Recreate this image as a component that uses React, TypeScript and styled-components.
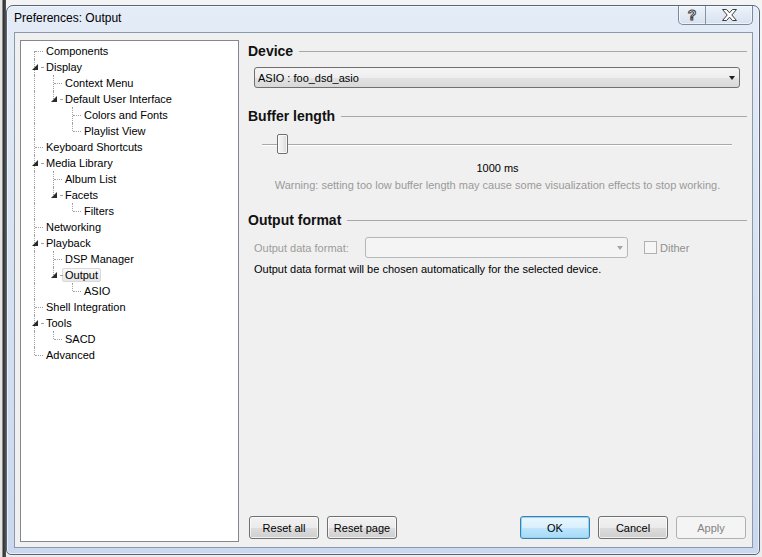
import React from 'react';
import styled, { createGlobalStyle, css } from 'styled-components';

const GlobalStyle = createGlobalStyle`
  html, body { margin: 0; padding: 0; }
  body {
    width: 762px; height: 557px; overflow: hidden;
    font-family: "Liberation Sans", Arial, sans-serif;
    font-size: 11px; color: #000;
  }
  * { box-sizing: border-box; }
`;

const Desktop = styled.div`
  width: 762px;
  height: 557px;
  padding: 5px 2px 2px 6px;
  display: flex;
  background:
    linear-gradient(90deg, #e4e4e4 0, #e4e4e4 2px, #2e2e2e 3px, #555 6px, transparent 6px),
    linear-gradient(180deg, #f4f4f4 0, #ececec 100%);
`;

const Window = styled.div`
  flex: 1;
  display: flex;
  flex-direction: column;
  border: 1px solid #58667a;
  border-radius: 7px 7px 5px 5px;
  background: linear-gradient(180deg, #e4ecf7 0%, #d9e3f1 40%, #cbd7ee 100%);
  box-shadow: inset 0 0 0 1px rgba(255, 255, 255, 0.55);
`;

const TitleBar = styled.div`
  height: 26px;
  display: flex;
  align-items: flex-start;
  padding-left: 7px;
`;

const Title = styled.div`
  font-size: 12px;
  line-height: 24px;
  color: #000;
`;

const CaptionGroup = styled.div`
  margin-left: auto;
  margin-right: 6px;
  height: 19px;
  display: flex;
  border: 1px solid #7d8a9d;
  border-top: none;
  border-radius: 0 0 5px 5px;
  overflow: hidden;
  background: linear-gradient(180deg, #eef3fa 0%, #e2eaf5 50%, #d7e1ef 100%);
  box-shadow: inset 0 0 0 1px rgba(255, 255, 255, 0.6);
`;

const CaptionButton = styled.div<{ $w: number; $divider?: boolean }>`
  width: ${(p) => p.$w}px;
  display: flex;
  align-items: center;
  justify-content: center;
  ${(p) => p.$divider && css`border-left: 1px solid #8593a7;`}
`;

const HelpGlyph = styled.span`
  font-family: "Liberation Sans", Arial, sans-serif;
  font-weight: bold;
  font-size: 14px;
  line-height: 14px;
  color: #fff;
  -webkit-text-stroke: 1px #3c3c3c;
`;

const Client = styled.div`
  flex: 1;
  margin: 0 6px 6px 7px;
  border: 1px solid #8a98ac;
  background: #f0f0f0;
  display: grid;
  grid-template-columns: 219px 1fr;
  column-gap: 9px;
  padding: 7px 5px 5px 5px;
`;

/* ---------- Tree ---------- */

const Tree = styled.div`
  border: 1px solid #828790;
  background: #fff;
  padding: 2px 0 0 6px;
`;

const TreeRow = styled.div`
  display: flex;
  height: 16px;
  align-items: center;
`;

const Guide = styled.span<{ $line: boolean }>`
  flex: none;
  width: 19px;
  height: 16px;
  position: relative;
  ${(p) =>
    p.$line &&
    css`
      &::before {
        content: '';
        position: absolute;
        left: 7px;
        top: 0;
        bottom: 0;
        border-left: 1px dotted #a0a0a0;
      }
    `}
`;

const Connector = styled.span<{ $first: boolean; $last: boolean; $expander: boolean }>`
  flex: none;
  width: 16px;
  height: 16px;
  position: relative;
  &::before {
    content: '';
    position: absolute;
    left: 7px;
    top: ${(p) => (p.$first ? 8 : 0)}px;
    bottom: ${(p) => (p.$last ? 8 : 0)}px;
    border-left: 1px dotted #a0a0a0;
  }
  &::after {
    content: '';
    position: absolute;
    top: 8px;
    left: ${(p) => (p.$expander ? 14 : 8)}px;
    width: ${(p) => (p.$expander ? 2 : 8)}px;
    border-top: 1px dotted #a0a0a0;
  }
`;

const Expander = styled.span`
  position: absolute;
  left: 5px;
  top: 5px;
  width: 0;
  height: 0;
  border-right: 6px solid #2a2a2a;
  border-top: 6px solid transparent;
  z-index: 1;
`;

const TreeLabel = styled.span<{ $selected?: boolean }>`
  padding: 0 2px;
  border: 1px solid transparent;
  border-radius: 2px;
  line-height: 12px;
  white-space: nowrap;
  ${(p) =>
    p.$selected &&
    css`
      border-color: #d9d9d9;
      background: linear-gradient(180deg, #fafafa 0%, #e6e6e6 100%);
    `}
`;

/* ---------- Right page ---------- */

const Page = styled.div`
  display: flex;
  flex-direction: column;
  padding-top: 3px;
`;

const SectionHeader = styled.div<{ $mt?: number }>`
  display: flex;
  align-items: center;
  height: 16px;
  margin-top: ${(p) => p.$mt ?? 0}px;
`;

const HeaderText = styled.span`
  font-weight: bold;
  font-size: 14px;
  color: #111;
  white-space: nowrap;
`;

const Rule = styled.span`
  flex: 1;
  height: 1px;
  margin-left: 6px;
  background: #a8a8a8;
`;

const Combo = styled.div<{ $disabled?: boolean }>`
  height: 21px;
  display: flex;
  align-items: center;
  justify-content: space-between;
  padding: 0 4px 0 3px;
  border-radius: 3px;
  ${(p) =>
    p.$disabled
      ? css`
          border: 1px solid #b4b8bb;
          background: #f4f4f4;
          color: #8f8f8f;
        `
      : css`
          border: 1px solid #707070;
          background: linear-gradient(180deg, #f5f5f5 0%, #eeeeee 50%, #e3e3e3 51%, #d8d8d8 100%);
        `}
`;

const DeviceCombo = styled(Combo)`
  margin: 8px 7px 0 6px;
`;

const FormatCombo = styled(Combo)`
  width: 263px;
`;

const Arrow = styled.span<{ $disabled?: boolean }>`
  width: 0;
  height: 0;
  border-left: 3.5px solid transparent;
  border-right: 3.5px solid transparent;
  border-top: 4px solid ${(p) => (p.$disabled ? '#a4a4a4' : '#1e1e1e')};
`;

const Slider = styled.div`
  position: relative;
  height: 20px;
  margin: 10px 15px 0 14px;
  display: flex;
  align-items: center;
`;

const Rail = styled.div`
  flex: 1;
  height: 1px;
  background: #a9a9a9;
  box-shadow: 0 1px 0 #ffffff;
`;

const Thumb = styled.div`
  position: absolute;
  top: 0;
  width: 11px;
  height: 20px;
  border: 1px solid #707070;
  border-radius: 2px;
  background: linear-gradient(90deg, #f7f7f7 0%, #ececec 50%, #d9d9d9 100%);
  box-shadow: inset 0 0 0 1px rgba(255, 255, 255, 0.7);
`;

const CenterText = styled.div<{ $muted?: boolean; $mt: number }>`
  text-align: center;
  line-height: 14px;
  margin-top: ${(p) => p.$mt}px;
  color: ${(p) => (p.$muted ? '#9a9a9a' : '#000')};
`;

const FormatRow = styled.div`
  display: flex;
  align-items: center;
  margin: 9px 0 0 6px;
`;

const FieldLabel = styled.span`
  width: 111px;
  color: #9c9c9c;
`;

const CheckBox = styled.span`
  width: 13px;
  height: 13px;
  margin-left: 16px;
  border: 1px solid #b1b1b1;
  background: #f6f6f6;
`;

const CheckLabel = styled.span`
  margin-left: 3px;
  color: #8f8f8f;
`;

const Note = styled.div`
  margin: 4px 0 0 6px;
  line-height: 14px;
`;

const Spacer = styled.div`
  flex: 1;
`;

const ButtonBar = styled.div`
  display: flex;
  gap: 8px;
  padding: 0 1px 3px 1px;
`;

const ButtonGap = styled.div`
  flex: 1;
`;

type Variant = 'normal' | 'default' | 'disabled';

const Button = styled.div<{ $variant?: Variant }>`
  width: 70px;
  height: 23px;
  display: flex;
  align-items: center;
  justify-content: center;
  border-radius: 3px;
  ${(p) => {
    switch (p.$variant) {
      case 'default':
        return css`
          border: 1px solid #3c7fb1;
          background: linear-gradient(180deg, #eaf6fd 0%, #d9f0fc 50%, #bee6fd 51%, #a7d9f5 100%);
          box-shadow: inset 0 0 0 1px #92d4f5;
          color: #000;
        `;
      case 'disabled':
        return css`
          border: 1px solid #adb2b5;
          background: #f4f4f4;
          color: #838383;
        `;
      default:
        return css`
          border: 1px solid #707070;
          background: linear-gradient(180deg, #f2f2f2 0%, #ebebeb 50%, #dddddd 51%, #cfcfcf 100%);
          box-shadow: inset 0 0 0 1px rgba(255, 255, 255, 0.7);
          color: #000;
        `;
    }
  }}
`;

/* ---------- Data ---------- */

type Node = { label: string; selected?: boolean; children?: Node[] };

const tree: Node[] = [
  { label: 'Components' },
  {
    label: 'Display',
    children: [
      { label: 'Context Menu' },
      {
        label: 'Default User Interface',
        children: [{ label: 'Colors and Fonts' }, { label: 'Playlist View' }],
      },
    ],
  },
  { label: 'Keyboard Shortcuts' },
  {
    label: 'Media Library',
    children: [{ label: 'Album List' }, { label: 'Facets', children: [{ label: 'Filters' }] }],
  },
  { label: 'Networking' },
  {
    label: 'Playback',
    children: [
      { label: 'DSP Manager' },
      { label: 'Output', selected: true, children: [{ label: 'ASIO' }] },
    ],
  },
  { label: 'Shell Integration' },
  { label: 'Tools', children: [{ label: 'SACD' }] },
  { label: 'Advanced' },
];

type Row = {
  label: string;
  selected?: boolean;
  guides: boolean[];
  first: boolean;
  last: boolean;
  expander: boolean;
};

function flatten(nodes: Node[], guides: boolean[], root: boolean, out: Row[]) {
  nodes.forEach((n, i) => {
    const last = i === nodes.length - 1;
    out.push({
      label: n.label,
      selected: n.selected,
      guides,
      first: root && i === 0,
      last,
      expander: !!n.children,
    });
    if (n.children) flatten(n.children, [...guides, !last], false, out);
  });
  return out;
}

const rows = flatten(tree, [], true, []);

const CloseGlyph = () => (
  <svg width="15" height="12" viewBox="0 0 15 12">
    <polygon
      points="0.5,0.5 4.5,0.5 7.5,3.8 10.5,0.5 14.5,0.5 9.8,6 14.5,11.5 10.5,11.5 7.5,8.2 4.5,11.5 0.5,11.5 5.2,6"
      fill="#ffffff"
      stroke="#3c3c3c"
      strokeWidth="1"
      strokeLinejoin="round"
    />
  </svg>
);

export default function App() {
  return (
    <>
      <GlobalStyle />
      <Desktop>
        <Window>
          <TitleBar>
            <Title>Preferences: Output</Title>
            <CaptionGroup>
              <CaptionButton $w={26}>
                <HelpGlyph>?</HelpGlyph>
              </CaptionButton>
              <CaptionButton $w={47} $divider>
                <CloseGlyph />
              </CaptionButton>
            </CaptionGroup>
          </TitleBar>
          <Client>
            <Tree>
              {rows.map((r, i) => (
                <TreeRow key={i}>
                  {r.guides.map((g, j) => (
                    <Guide key={j} $line={g} />
                  ))}
                  <Connector $first={r.first} $last={r.last} $expander={r.expander}>
                    {r.expander && <Expander />}
                  </Connector>
                  <TreeLabel $selected={r.selected}>{r.label}</TreeLabel>
                </TreeRow>
              ))}
            </Tree>
            <Page>
              <SectionHeader>
                <HeaderText>Device</HeaderText>
                <Rule />
              </SectionHeader>
              <DeviceCombo>
                <span>ASIO : foo_dsd_asio</span>
                <Arrow />
              </DeviceCombo>

              <SectionHeader $mt={20}>
                <HeaderText>Buffer length</HeaderText>
                <Rule />
              </SectionHeader>
              <Slider>
                <Rail />
                <Thumb style={{ left: 15 }} />
              </Slider>
              <CenterText $mt={7}>1000 ms</CenterText>
              <CenterText $mt={3} $muted>
                Warning: setting too low buffer length may cause some visualization effects to stop working.
              </CenterText>

              <SectionHeader $mt={20}>
                <HeaderText>Output format</HeaderText>
                <Rule />
              </SectionHeader>
              <FormatRow>
                <FieldLabel>Output data format:</FieldLabel>
                <FormatCombo $disabled>
                  <span />
                  <Arrow $disabled />
                </FormatCombo>
                <CheckBox />
                <CheckLabel>Dither</CheckLabel>
              </FormatRow>
              <Note>Output data format will be chosen automatically for the selected device.</Note>

              <Spacer />
              <ButtonBar>
                <Button>Reset all</Button>
                <Button>Reset page</Button>
                <ButtonGap />
                <Button $variant="default">OK</Button>
                <Button>Cancel</Button>
                <Button $variant="disabled">Apply</Button>
              </ButtonBar>
            </Page>
          </Client>
        </Window>
      </Desktop>
    </>
  );
}
